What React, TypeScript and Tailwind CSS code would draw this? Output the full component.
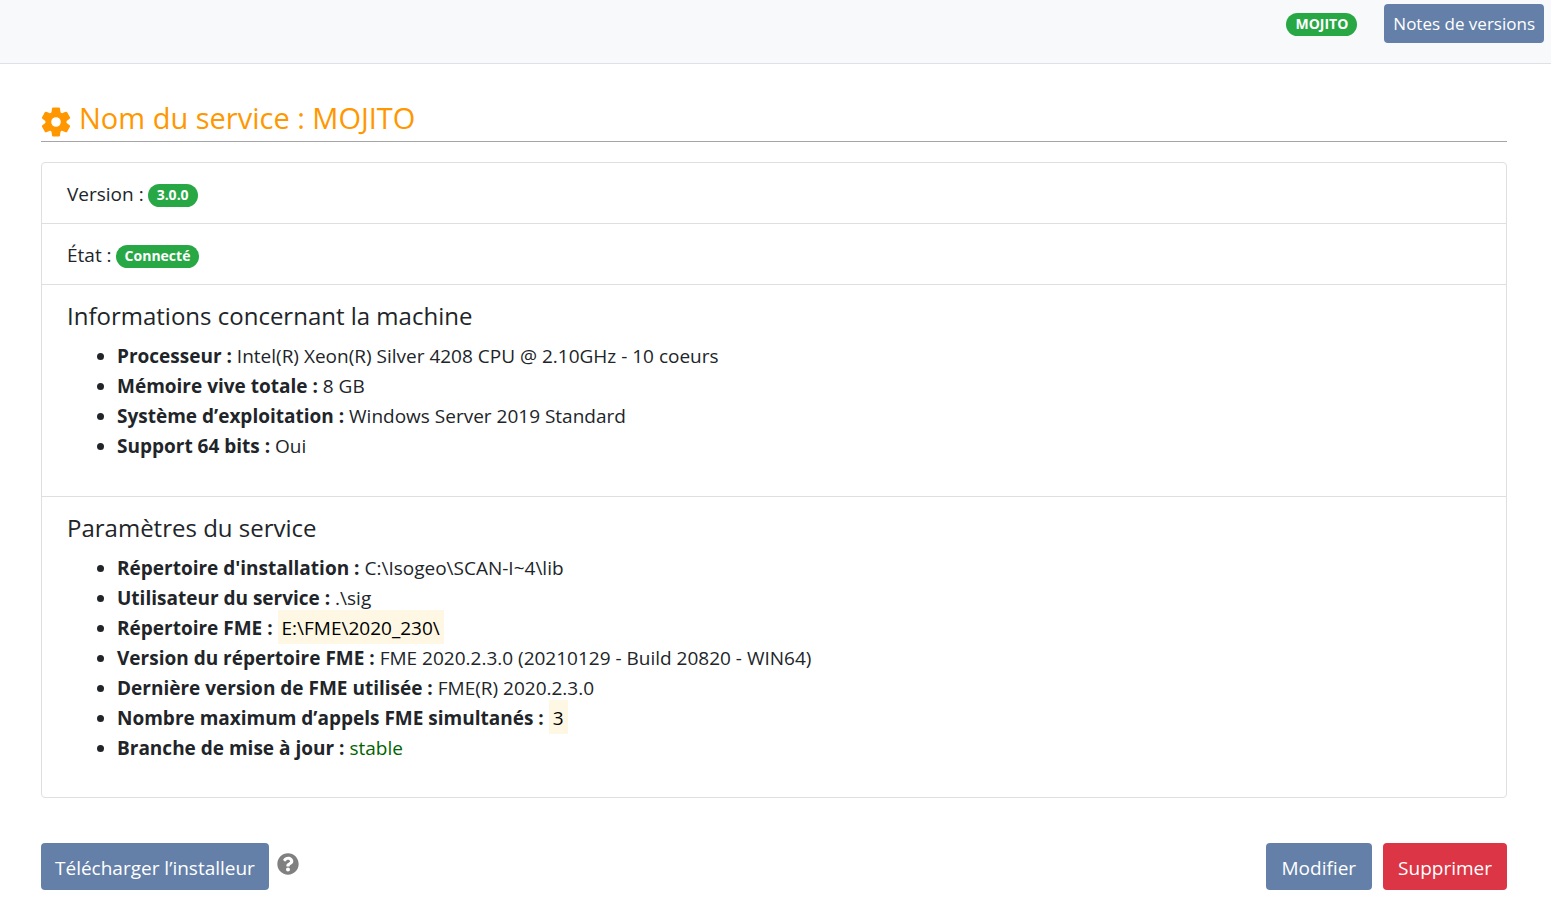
import React from "react";
import { FaQuestionCircle } from "react-icons/fa";

const TOOTH_ANGLES = [0, 60, 120, 180, 240, 300];

function Gear() {
  return (
    <svg viewBox="-15 -15 30 30" className="size-[30px]" fill="currentColor" aria-hidden="true">
      <circle r="7.7" fill="none" stroke="currentColor" strokeWidth="5.8" />
      {TOOTH_ANGLES.map((angle) => (
        <path
          key={angle}
          transform={`rotate(${angle})`}
          d="M-4.6 -8.5L-4 -13.4Q-3.8 -14.5 -2.8 -14.5H2.8Q3.8 -14.5 4 -13.4L4.6 -8.5Z"
        />
      ))}
    </svg>
  );
}

function Pill({ children }: { children: React.ReactNode }) {
  return (
    <span className="inline-flex h-[23px] items-center rounded-full bg-[#28a745] px-[9px] text-[14px] leading-none font-bold text-white">
      {children}
    </span>
  );
}

function Item({ label, children }: { label: string; children: React.ReactNode }) {
  return (
    <li>
      <strong className="font-bold">{label}</strong> {children}
    </li>
  );
}

function Value({ children }: { children: React.ReactNode }) {
  return <mark className="bg-[#fdf7e3] px-1 pt-[5px] pb-[3px] text-black">{children}</mark>;
}

function StatusRow({ label, value }: { label: string; value: string }) {
  return (
    <div className="flex items-center gap-1 px-[25px] pt-4 pb-3.5">
      {label}
      <span className="flex pt-0.5">
        <Pill>{value}</Pill>
      </span>
    </div>
  );
}

export default function App() {
  return (
    <div className="bg-white font-['Open_Sans','Noto_Sans',sans-serif] text-[19px] leading-[30px] text-[#212529]">
      <header className="flex h-16 items-start justify-end gap-[27px] border-b border-[#dee2e6] bg-[#f8f9fb] px-[7px] pt-1">
        <div className="flex h-10 items-center">
          <Pill>MOJITO</Pill>
        </div>
        <button className="h-[39px] rounded-[4px] bg-[#6480a8] px-[9px] text-[17px] text-white">Notes de versions</button>
      </header>
      <main className="pr-11 pb-5 pl-[41px]">
        <h1 className="mt-8 flex h-[46px] items-start gap-2 border-b border-[#a5a5a5] pt-1 text-[29px] leading-[36px] text-[#ff9800]">
          <span className="mt-[7px]">
            <Gear />
          </span>
          Nom du service : MOJITO
        </h1>
        <div className="mt-5 divide-y divide-[#dfdfdf] rounded-[4px] border border-[#dfdfdf]">
          <StatusRow label="Version :" value="3.0.0" />
          <StatusRow label="État :" value="Connecté" />
          <section className="px-[25px] pt-4 pb-[35px]">
            <h2 className="mb-[10px] text-[24px] leading-[30px]">Informations concernant la machine</h2>
            <ul className="list-disc pl-[50px]">
              <Item label="Processeur :">Intel(R) Xeon(R) Silver 4208 CPU @ 2.10GHz - 10 coeurs</Item>
              <Item label="Mémoire vive totale :">8 GB</Item>
              <Item label="Système d’exploitation :">Windows Server 2019 Standard</Item>
              <Item label="Support 64 bits :">Oui</Item>
            </ul>
          </section>
          <section className="px-[25px] pt-4 pb-[34px]">
            <h2 className="mb-[10px] text-[24px] leading-[30px]">Paramètres du service</h2>
            <ul className="list-disc pl-[50px]">
              <Item label="Répertoire d'installation :">C:\Isogeo\SCAN-I~4\lib</Item>
              <Item label="Utilisateur du service :">.\sig</Item>
              <Item label="Répertoire FME :">
                <Value>E:\FME\2020_230\</Value>
              </Item>
              <Item label="Version du répertoire FME :">FME 2020.2.3.0 (20210129 - Build 20820 - WIN64)</Item>
              <Item label="Dernière version de FME utilisée :">FME(R) 2020.2.3.0</Item>
              <Item label="Nombre maximum d’appels FME simultanés :">
                <Value>3</Value>
              </Item>
              <Item label="Branche de mise à jour :">
                <span className="text-[#006400]">stable</span>
              </Item>
            </ul>
          </section>
        </div>
        <div className="mt-[45px] flex gap-[11px] text-white">
          <div className="mr-auto flex gap-2">
            <button className="h-[47px] rounded-[4px] bg-[#6480a8] px-[14px] pt-0.5">Télécharger l’installeur</button>
            <a href="#aide" aria-label="Aide" className="mt-[10px] h-fit text-[#808080]">
              <FaQuestionCircle className="size-[22px]" />
            </a>
          </div>
          <button className="h-[47px] rounded-[4px] bg-[#6480a8] px-4 pt-0.5">Modifier</button>
          <button className="h-[47px] rounded-[4px] bg-[#dc3545] px-[15px] pt-0.5">Supprimer</button>
        </div>
      </main>
    </div>
  );
}
